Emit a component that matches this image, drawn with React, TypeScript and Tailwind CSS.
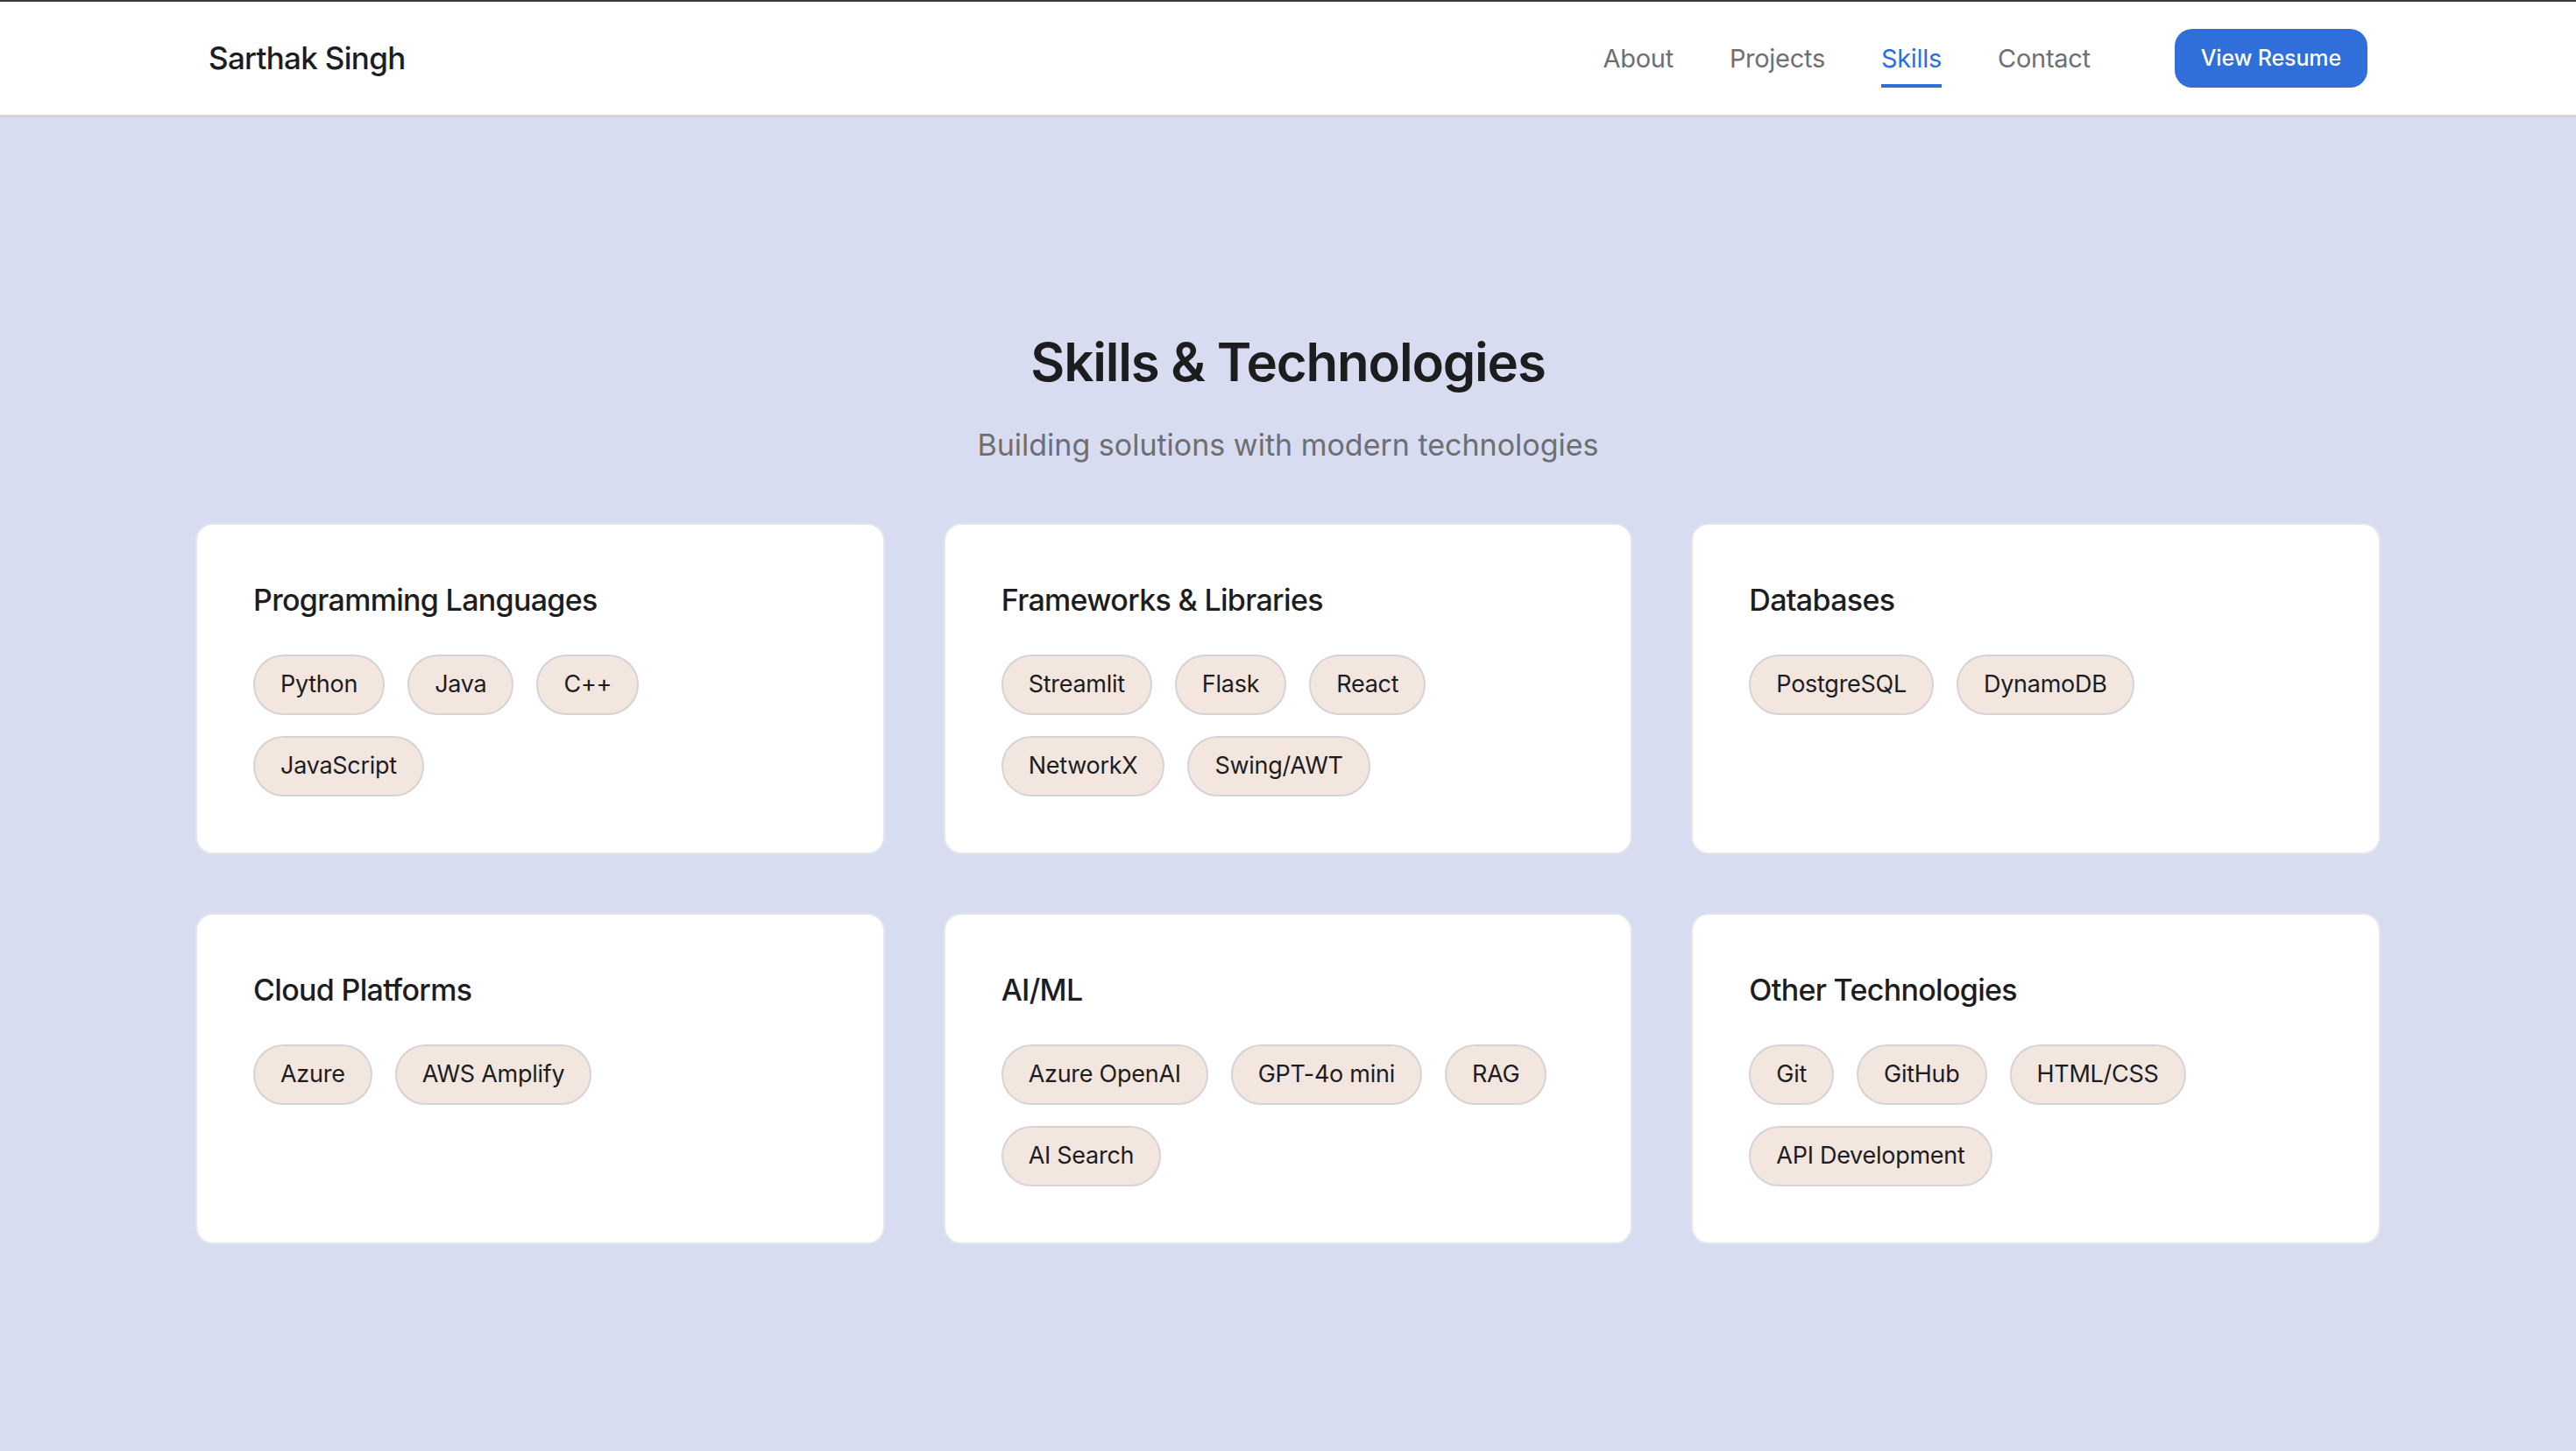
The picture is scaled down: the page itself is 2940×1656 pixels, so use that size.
const navLinks = ['About', 'Projects', 'Skills', 'Contact'];

const categories: { title: string; skills: string[] }[] = [
  { title: 'Programming Languages', skills: ['Python', 'Java', 'C++', 'JavaScript'] },
  { title: 'Frameworks & Libraries', skills: ['Streamlit', 'Flask', 'React', 'NetworkX', 'Swing/AWT'] },
  { title: 'Databases', skills: ['PostgreSQL', 'DynamoDB'] },
  { title: 'Cloud Platforms', skills: ['Azure', 'AWS Amplify'] },
  { title: 'AI/ML', skills: ['Azure OpenAI', 'GPT-4o mini', 'RAG', 'AI Search'] },
  { title: 'Other Technologies', skills: ['Git', 'GitHub', 'HTML/CSS', 'API Development'] },
];

function Header() {
  return (
    <header className="h-[134px] bg-white border-t-2 border-t-[#3a3a3a] border-b-[3px] border-b-[#d6d6db]">
      <div className="h-full px-[238px] flex items-center justify-between">
        <div className="text-[35px] font-medium text-[#1d1d1f] tracking-[-0.02em]">Sarthak Singh</div>
        <nav className="flex items-center">
          <ul className="flex items-center gap-[64px]">
            {navLinks.map((link) => (
              <li key={link} className="relative">
                <a
                  href="#"
                  className={
                    link === 'Skills'
                      ? 'text-[29px] tracking-[-0.01em] text-[#2f6fdc]'
                      : 'text-[29px] tracking-[-0.01em] text-[#6e6e73]'
                  }
                >
                  {link}
                </a>
                {link === 'Skills' && (
                  <span className="absolute left-0 right-0 -bottom-[12px] h-[4px] bg-[#2f6fdc]" />
                )}
              </li>
            ))}
          </ul>
          <button className="ml-[96px] h-[67px] px-[30px] rounded-[20px] bg-[#306fd9] text-white text-[25px] font-medium tracking-[-0.005em]">
            View Resume
          </button>
        </nav>
      </div>
    </header>
  );
}

function SkillCard({ title, skills }: { title: string; skills: string[] }) {
  return (
    <div className="bg-white rounded-[20px] border-2 border-[#e4e6ec] pt-[64px] pb-[64px] px-[64px]">
      <h3 className="text-[34px] leading-[44px] font-medium text-[#1d1d1f] tracking-[-0.02em]">{title}</h3>
      <div className="mt-[40px] flex flex-wrap gap-x-[26px] gap-y-[24px]">
        {skills.map((skill) => (
          <span
            key={skill}
            className="h-[69px] px-[29px] flex items-center rounded-full bg-[#f3e6df] border-2 border-[#d6d3d6] text-[27px] tracking-[-0.01em] text-[#1d1d1f]"
          >
            {skill}
          </span>
        ))}
      </div>
    </div>
  );
}

export default function App() {
  return (
    <div className="min-h-[1656px] bg-[#d7dcf0]" style={{ fontFamily: 'Inter, "Noto Sans", sans-serif' }}>
      <Header />
      <main className="pt-[244px] pb-[200px]">
        <h2 className="text-center text-[60px] leading-[70px] font-semibold text-[#1d1d1f] tracking-[-0.02em]">
          Skills &amp; Technologies
        </h2>
        <p className="mt-[36px] text-center text-[34px] leading-[48px] text-[#6e6e73]">
          Building solutions with modern technologies
        </p>
        <div className="mt-[65px] px-[223px] grid grid-cols-3 gap-x-[67px] gap-y-[67px]">
          {categories.map((c) => (
            <SkillCard key={c.title} title={c.title} skills={c.skills} />
          ))}
        </div>
      </main>
    </div>
  );
}
